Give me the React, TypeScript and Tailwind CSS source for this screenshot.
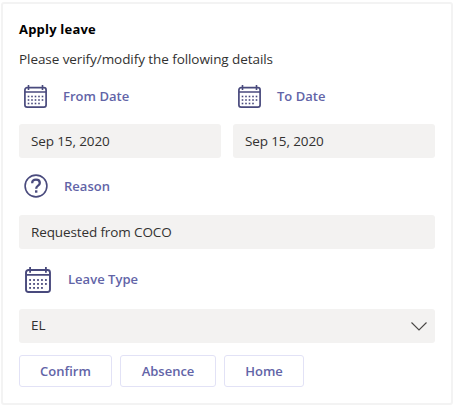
import type { ReactNode } from "react";

function CalendarIcon({ size }: { size: number }) {
  const dots = [
    [4.5, 11.5], [8, 11.5], [11.5, 11.5], [15, 11.5], [18.5, 11.5],
    [4.5, 15], [8, 15], [11.5, 15], [15, 15], [18.5, 15],
    [4.5, 18.5], [8, 18.5], [11.5, 18.5], [15, 18.5],
  ];
  return (
    <svg width={size} height={size} viewBox="0 0 23 23" fill="none" stroke="#494a7d" className="shrink-0">
      <rect x="0.9" y="2.7" width="21.2" height="19.4" rx="2.2" strokeWidth="1.7" />
      <path d="M1 7h21M4.5 0v5M18.5 0v5" strokeWidth="1.6" />
      {dots.map(([x, y]) => (
        <rect key={`${x}-${y}`} x={x - 0.8} y={y - 0.8} width="1.6" height="1.6" fill="#494a7d" stroke="none" />
      ))}
    </svg>
  );
}

function HelpIcon() {
  return (
    <svg width="24" height="24" viewBox="0 0 24 24" fill="none" stroke="#494a7d" className="shrink-0">
      <circle cx="12" cy="12" r="10.9" strokeWidth="1.6" />
      <path d="M8.2 9.2c0-2.3 1.6-3.5 3.8-3.5s3.8 1.3 3.8 3.2c0 1.5-.8 2.2-2 3-1.2.8-1.6 1.3-1.6 2.8" strokeWidth="2.3" />
      <rect x="11" y="16.3" width="2.4" height="2.4" fill="#494a7d" stroke="none" />
    </svg>
  );
}

function Label({ children, className }: { children: ReactNode; className: string }) {
  return (
    <span className={`text-[13px] font-semibold leading-5 tracking-[0.03px] text-[#6264a7] ${className}`}>
      {children}
    </span>
  );
}

function Field({ children, className }: { children: ReactNode; className: string }) {
  return (
    <div className={`flex h-[34px] items-center rounded-[3px] bg-[#f3f2f1] px-3 text-[13.5px] tracking-[-0.12px] text-[#323130] ${className}`}>
      {children}
    </div>
  );
}

function Action({ children, className }: { children: ReactNode; className: string }) {
  return (
    <button className={`h-8 rounded-[3px] border border-[#e2e2f6] text-[13px] font-semibold leading-5 text-[#6264a7] ${className}`}>
      {children}
    </button>
  );
}

export default function App() {
  return (
    <main className="h-[408px] w-[457px] bg-white pl-px pt-[2px] font-['Open_Sans','Noto_Sans',sans-serif]">
      <section className="h-[403px] w-[452px] rounded-[3px] border-2 border-[#f3f3f3] px-4 pt-[15px]">
        <h1 className="h-5 whitespace-nowrap text-[13px] font-bold leading-5 tracking-[0.2px] text-black">Apply leave</h1>
        <p className="mt-[10px] h-5 whitespace-nowrap text-[13.5px] leading-5 tracking-[-0.07px] text-[#323130]">
          Please verify/modify the following details
        </p>
        <div className="mt-4 grid grid-cols-2 gap-3">
          <div>
            <div className="flex h-[23px] items-center pl-[5px]">
              <CalendarIcon size={23} />
              <Label className="ml-4 pb-0.5">From Date</Label>
            </div>
            <Field className="mt-4">Sep 15, 2020</Field>
          </div>
          <div>
            <div className="flex h-[23px] items-center pl-[5px]">
              <CalendarIcon size={23} />
              <Label className="ml-4 pb-0.5">To Date</Label>
            </div>
            <Field className="mt-4">Sep 15, 2020</Field>
          </div>
        </div>
        <div className="mt-4 flex h-6 items-center pl-[5px]">
          <HelpIcon />
          <Label className="ml-4">Reason</Label>
        </div>
        <Field className="mt-[17px]">Requested from COCO</Field>
        <div className="mt-[18px] flex h-[26px] items-center pl-[6px]">
          <CalendarIcon size={26} />
          <Label className="ml-[17px] pb-0.5">Leave Type</Label>
        </div>
        <Field className="mt-4 justify-between pr-2">
          <span className="pb-0.5">EL</span>
          <svg width="16" height="9" viewBox="0 0 16 9" fill="none" stroke="#484644" strokeWidth="1.1">
            <path d="M0.5 0.5 8 8l7.5-7.5" />
          </svg>
        </Field>
        <div className="mt-3 flex gap-2">
          <Action className="w-[93px]">Confirm</Action>
          <Action className="w-[96px]">Absence</Action>
          <Action className="w-[80px]">Home</Action>
        </div>
      </section>
    </main>
  );
}
